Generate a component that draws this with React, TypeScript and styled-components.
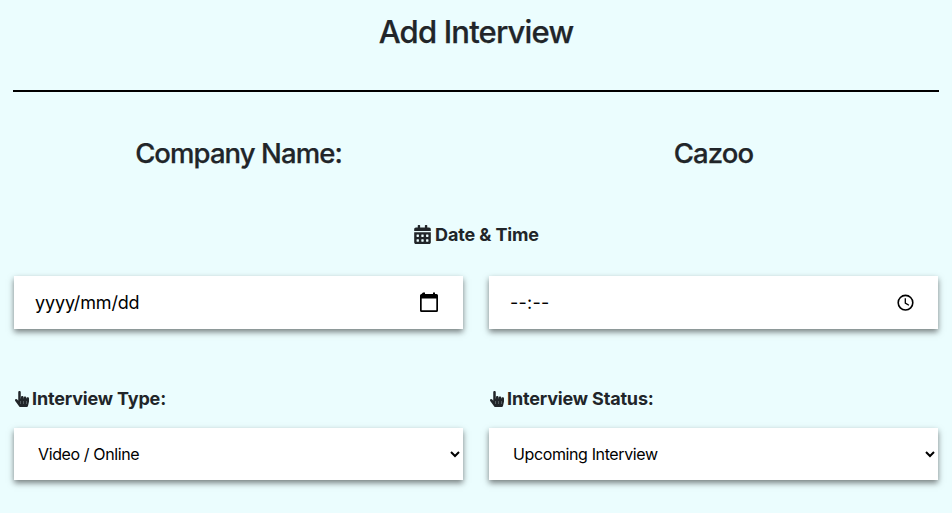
import React from "react";
import styled, { createGlobalStyle } from "styled-components";
import { FaCalendarAlt, FaHandPointer } from "react-icons/fa";

const GlobalStyle = createGlobalStyle`
  *, *::before, *::after { box-sizing: border-box; }
  body {
    margin: 0;
    background: #ebfdfe;
    color: #212529;
    font-family: Inter, "Liberation Sans", sans-serif;
  }
`;

const Page = styled.main`
  height: 513px;
  padding: 0 13px;
  overflow: hidden;
`;

const Header = styled.header`
  height: 92px;
  padding-top: 12px;
  border-bottom: 2px solid #000;
  text-align: center;
`;

const Title = styled.h1`
  margin: 0;
  font-size: 31px;
  line-height: 40px;
  font-weight: 500;
  letter-spacing: -0.82px;
  -webkit-text-stroke: 0.25px currentColor;
`;

const Columns = styled.div`
  display: grid;
  grid-template-columns: 1fr 1fr;
  column-gap: 24px;
`;

const CompanyRow = styled(Columns)`
  padding-top: 44px;
  text-align: center;
`;

const CompanyText = styled.h2`
  margin: 0;
  font-size: 27.5px;
  line-height: 35px;
  font-weight: 500;
  letter-spacing: -0.92px;
  -webkit-text-stroke: 0.25px currentColor;
`;

const SectionLabel = styled.div`
  display: flex;
  align-items: center;
  justify-content: center;
  gap: 3px;
  margin-top: 50px;
  height: 26px;
  font-size: 18px;
  font-weight: 700;
  letter-spacing: -0.12px;
`;

const PickerRow = styled(Columns)`
  margin-top: 29px;
  padding: 0 1px;
  column-gap: 26px;
`;

const Picker = styled.button<{ $spacing: number }>`
  display: flex;
  align-items: center;
  justify-content: space-between;
  height: 53px;
  padding: 0 24px 0 21px;
  border: 0;
  background: #fff;
  color: #000;
  box-shadow: 0 3px 6px rgba(0, 0, 0, 0.5);
  font: 400 18px/24px Inter, sans-serif;
  letter-spacing: ${(p) => p.$spacing}px;
`;

const SelectRow = styled(Columns)`
  margin-top: 56px;
  padding: 0 1px;
  column-gap: 26px;
`;

const Field = styled.label`
  display: block;
`;

const FieldLabel = styled.span`
  display: flex;
  align-items: center;
  gap: 2px;
  height: 26px;
  font-size: 18px;
  font-weight: 700;
  letter-spacing: -0.17px;

  svg {
    margin-top: 1px;
  }
`;

const Select = styled.select`
  display: block;
  width: 100%;
  height: 52px;
  margin-top: 17px;
  padding: 0 0 0 20px;
  border: 0;
  border-radius: 0;
  background: #fff;
  color: #000;
  box-shadow: 0 3px 6px rgba(0, 0, 0, 0.5);
  font: 400 16px Inter, sans-serif;
  letter-spacing: -0.38px;
`;

const CalendarIcon = () => (
  <svg width="20" height="22" viewBox="0 0 20 22" aria-hidden="true">
    <path
      fillRule="evenodd"
      d="M4 .5h2v1.500h8V.5h2v1.500h1.500A1.500 1.500 0 0 1 19 3.500V18.500A1.500 1.500 0 0 1 17.500 20H2.500A1.500 1.500 0 0 1 1 18.500V3.500A1.500 1.500 0 0 1 2.500 2ZM2.700 6.500v11.800h14.600V6.500Z"
    />
  </svg>
);

const ClockIcon = () => (
  <svg width="18" height="18" viewBox="0 0 18 18" fill="none" stroke="#000" aria-hidden="true">
    <circle cx="9.500" cy="8.700" r="7.300" strokeWidth="1.600" />
    <path d="M9.300 4.300V9.100L12.900 11.200" strokeWidth="1.300" />
  </svg>
);

export default function App() {
  return (
    <>
      <GlobalStyle />
      <Page>
        <Header>
          <Title>Add Interview</Title>
        </Header>
        <CompanyRow>
          <CompanyText>Company Name:</CompanyText>
          <CompanyText>Cazoo</CompanyText>
        </CompanyRow>
        <SectionLabel>
          <FaCalendarAlt size={19} />
          <span>Date &amp; Time</span>
        </SectionLabel>
        <PickerRow>
          <Picker type="button" $spacing={-0.15}>
            <span>yyyy/mm/dd</span>
            <CalendarIcon />
          </Picker>
          <Picker type="button" $spacing={0.25}>
            <span>--:--</span>
            <ClockIcon />
          </Picker>
        </PickerRow>
        <SelectRow>
          <Field>
            <FieldLabel>
              <FaHandPointer size={16} />
              <span>Interview Type:</span>
            </FieldLabel>
            <Select defaultValue="Video / Online">
              <option>Video / Online</option>
            </Select>
          </Field>
          <Field>
            <FieldLabel>
              <FaHandPointer size={16} />
              <span>Interview Status:</span>
            </FieldLabel>
            <Select defaultValue="Upcoming Interview">
              <option>Upcoming Interview</option>
            </Select>
          </Field>
        </SelectRow>
      </Page>
    </>
  );
}
